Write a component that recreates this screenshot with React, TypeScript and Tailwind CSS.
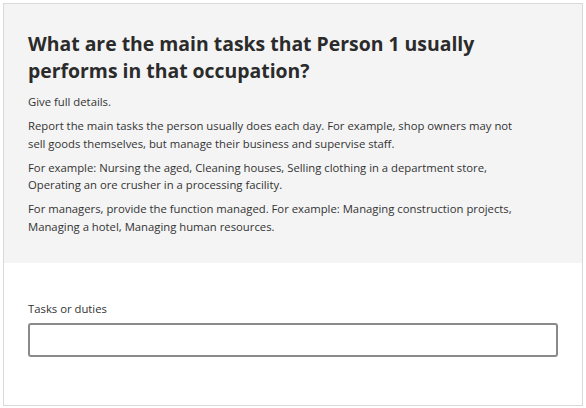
import React from 'react';

const paragraphs = [
    "Give full details.",
    "Report the main tasks the person usually does each day. For example, shop owners may not sell goods themselves, but manage their business and supervise staff.",
    "For example: Nursing the aged, Cleaning houses, Selling clothing in a department store, Operating an ore crusher in a processing facility.",
    "For managers, provide the function managed. For example: Managing construction projects, Managing a hotel, Managing human resources.",
];

export default function App() {
    return (
        <div className="w-[586px] h-[408px] bg-white pt-[3px] pl-[3px] font-['Segoe_UI','Open_Sans',sans-serif] text-[#333]">
            <div className="w-[580px] h-[403px] border border-[#d9d9d9] flex flex-col">
                <div className="bg-[#f4f4f4] px-6 pt-[26px] pb-[28px]">
                    <h1 className="text-[19.4px] leading-[27px] font-bold text-[#2b2b2b]">
                        What are the main tasks that Person 1 usually performs in that occupation?
                    </h1>
                    <div className="mt-[9px] flex flex-col gap-[6.5px] max-w-[500px]">
                        {paragraphs.map((p, i) => (
                            <p key={i} className="text-[11.3px] leading-[17.5px]">{p}</p>
                        ))}
                    </div>
                </div>
                <div className="px-6 pt-[37px]">
                    <label className="block text-[11.3px] leading-[18px]">Tasks or duties</label>
                    <input
                        type="text"
                        className="mt-[5px] w-full h-[34px] border-2 border-[#8a8a8a] rounded-[3px] bg-white outline-none"
                    />
                </div>
            </div>
        </div>
    );
}
